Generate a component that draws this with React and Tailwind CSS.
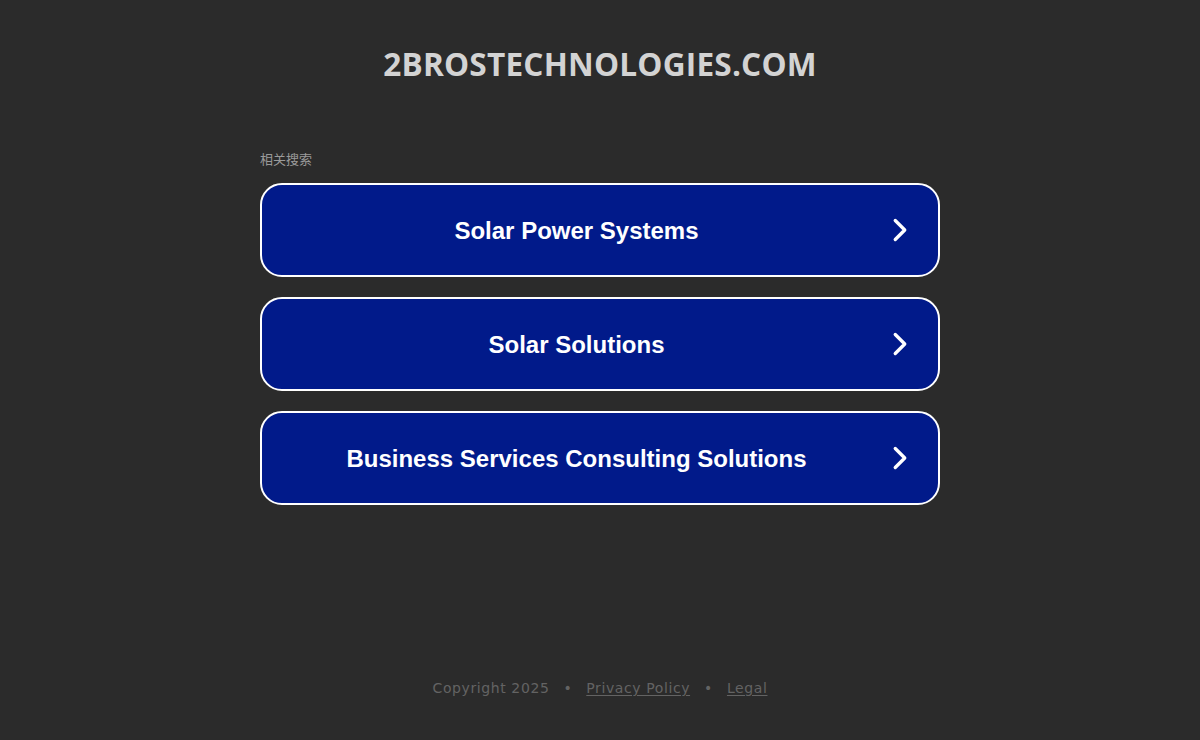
import { ChevronRight } from "lucide-react"

const links = ["Solar Power Systems", "Solar Solutions", "Business Services Consulting Solutions"]

export default function App() {
  return (
    <div className="min-h-[740px] bg-[#2b2b2b] flex flex-col items-center">
      <h1 className="mt-[44px] text-[31.6px] leading-[40px] font-bold text-[#d3d3d3] tracking-[0.2px] font-['Open_Sans',sans-serif]">
        2BROSTECHNOLOGIES.COM
      </h1>

      <div className="w-[680px] mt-[67px]">
        <p className="text-[13px] leading-[16px] text-[#9a9a9a] font-['Noto_Sans_CJK_SC',sans-serif]">相关搜索</p>
        <div className="mt-[16px] flex flex-col gap-[20px]">
          {links.map((t) => (
            <a
              key={t}
              href="#"
              className="h-[94px] rounded-[22px] border-2 border-white bg-[#011a8a] flex items-center pl-[10px] pr-[19px]"
            >
              <span className="flex-1 text-center pt-[1px] text-[24px] font-bold text-white font-['Liberation_Sans',Arial,sans-serif]">
                {t}
              </span>
              <ChevronRight size={38} strokeWidth={2.1} className="text-white" />
            </a>
          ))}
        </div>
      </div>

      <footer className="mt-[173px] text-[14px] tracking-[0.6px] text-[#636363] font-['DejaVu_Sans',sans-serif] flex items-center gap-[14px]">
        <span>Copyright 2025</span>
        <span>•</span>
        <a href="#" className="underline underline-offset-2">Privacy Policy</a>
        <span>•</span>
        <a href="#" className="underline underline-offset-2">Legal</a>
      </footer>
    </div>
  )
}
